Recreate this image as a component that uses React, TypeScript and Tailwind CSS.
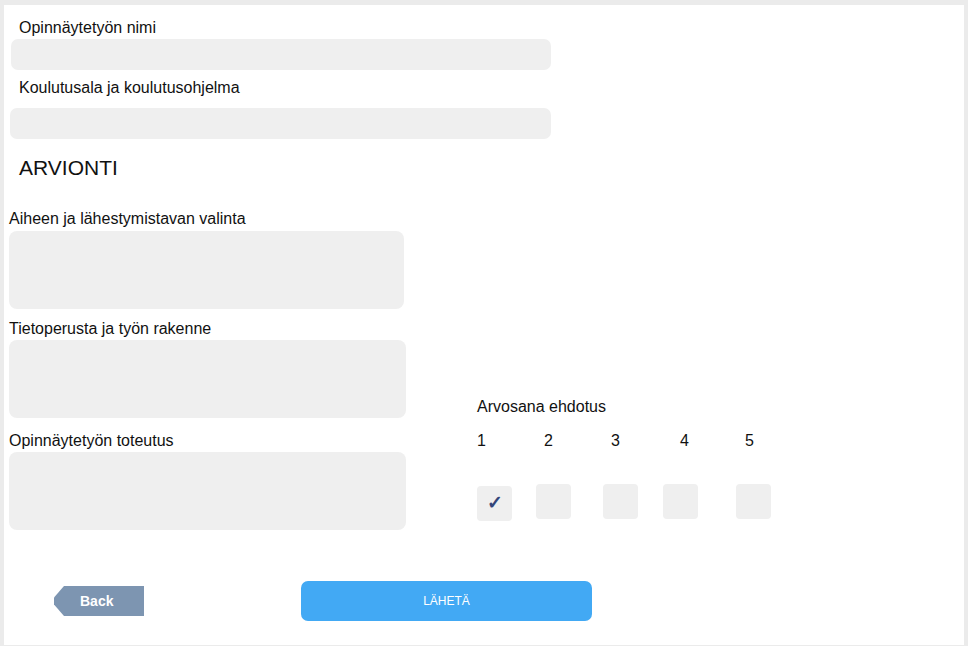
export default function App() {
  const grades = [
    { n: "1", w: "w-[67px]" },
    { n: "2", w: "w-[67px]" },
    { n: "3", w: "w-[69px]" },
    { n: "4", w: "w-[65px]" },
    { n: "5", w: "w-[20px]" },
  ];

  return (
    <div className="h-[646px] w-[968px] bg-[#ebebeb] pt-[5px] pl-[4px] pr-[4px] font-['Liberation_Sans',Arial,sans-serif] text-[#111]">
      <div className="h-[640px] bg-white flex flex-col">
        {/* top fields */}
        <label className="mt-[13px] ml-[15px] text-[16px] leading-[20px]">Opinnäytetyön nimi</label>
        <div className="mt-[1px] ml-[7px] h-[31px] w-[540px] rounded-[7px] bg-[#efefef]" />

        <label className="mt-[8px] ml-[15px] text-[16px] leading-[20px]">Koulutusala ja koulutusohjelma</label>
        <div className="mt-[10px] ml-[6px] h-[31px] w-[541px] rounded-[7px] bg-[#efefef]" />

        <h2 className="mt-[17px] ml-[15px] text-[21px] leading-[24px]">ARVIONTI</h2>

        <div className="mt-[29px] flex">
          {/* left column */}
          <div className="ml-[5px] flex w-[397px] flex-col">
            <label className="text-[16px] leading-[20px]">Aiheen ja lähestymistavan valinta</label>
            <div className="mt-[2px] h-[78px] w-[395px] rounded-[8px] bg-[#efefef]" />

            <label className="mt-[10px] text-[16px] leading-[20px]">Tietoperusta ja työn rakenne</label>
            <div className="mt-[1px] h-[78px] w-[397px] rounded-[8px] bg-[#efefef]" />

            <label className="mt-[13px] text-[16px] leading-[20px]">Opinnäytetyön toteutus</label>
            <div className="mt-[1px] h-[78px] w-[397px] rounded-[8px] bg-[#efefef]" />
          </div>

          {/* grade proposal */}
          <div className="ml-[71px] flex flex-col">
            <div className="mt-[188px] text-[16px] leading-[20px]">Arvosana ehdotus</div>
            <div className="mt-[14px] flex text-[16px] leading-[20px]">
              {grades.map((g) => (
                <span key={g.n} className={g.w}>
                  {g.n}
                </span>
              ))}
            </div>
            <div className="mt-[33px] flex items-start">
              <div className="mt-[2px] flex h-[35px] w-[35px] items-center justify-center rounded-[4px] bg-[#efefef] text-[19px] font-bold text-[#34467a]">
                ✓
              </div>
              <div className="ml-[24px] h-[35px] w-[35px] rounded-[4px] bg-[#efefef]" />
              <div className="ml-[32px] h-[35px] w-[35px] rounded-[4px] bg-[#efefef]" />
              <div className="ml-[25px] h-[35px] w-[35px] rounded-[4px] bg-[#efefef]" />
              <div className="ml-[38px] h-[35px] w-[35px] rounded-[4px] bg-[#efefef]" />
            </div>
          </div>
        </div>

        {/* buttons */}
        <div className="mt-[51px] flex items-center">
          <button className="ml-[50px] flex h-[30px] w-[90px] items-center bg-[#7d95b1] pl-[26px] text-[14px] font-bold text-white [clip-path:polygon(10px_0,100%_0,100%_100%,10px_100%,0_62%,0_38%)]">
            Back
          </button>
          <button className="ml-[157px] flex h-[40px] w-[291px] items-center justify-center rounded-[7px] bg-[#42a9f4] text-[12px] text-white">
            LÄHETÄ
          </button>
        </div>
      </div>
    </div>
  );
}
